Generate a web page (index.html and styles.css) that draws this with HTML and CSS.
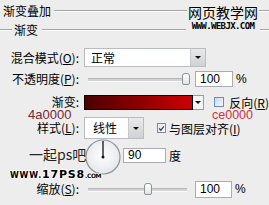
FILE: index.html
```html
<!DOCTYPE html>
<html>
<head>
<meta charset="utf-8">
<link rel="stylesheet" href="styles.css">
</head>
<body>
<div class="panel">
  <div class="legend legend-main"><span class="legend-text">渐变叠加</span><span class="rule"></span></div>
  <div class="legend legend-sub"><span class="rule rule-lead"></span><span class="legend-text">渐变</span><span class="rule"></span></div>

  <div class="row row-blend">
    <span class="label">混合模式(<u>O</u>):</span>
    <div class="select select-blend"><span class="select-value">正常</span><span class="select-btn"><i class="tri"></i></span></div>
  </div>

  <div class="row row-opacity">
    <span class="label">不透明度(<u>P</u>):</span>
    <div class="slider slider-opacity"><span class="track"></span><span class="thumb"></span></div>
    <div class="num">100</div><span class="unit">%</span>
  </div>

  <div class="row row-gradient">
    <span class="label">渐变:</span>
    <div class="grad"></div><span class="grad-btn"><i class="tri"></i></span>
    <span class="check"></span><span class="check-label">反向(<u>R</u>)</span>
  </div>

  <div class="row row-style">
    <span class="label">样式(<u>L</u>):</span>
    <div class="select select-style"><span class="select-value">线性</span><span class="select-btn"><i class="tri"></i></span></div>
    <span class="check checked"><svg viewBox="0 0 9 9" width="9" height="9"><path d="M1.5 4.5 L3.7 6.8 L7.6 1.8" fill="none" stroke="#2a3a6a" stroke-width="1.6"/></svg></span><span class="check-label">与图层对齐(<u>I</u>)</span>
  </div>

  <div class="row row-angle">
    <span class="label label-angle"></span>
    <svg class="dial" viewBox="0 0 36 36" width="36" height="36">
      <defs><radialGradient id="dg" cx="50%" cy="45%" r="55%"><stop offset="0" stop-color="#ffffff"/><stop offset="1" stop-color="#e4e7ec"/></radialGradient></defs>
      <circle cx="18" cy="18" r="17" fill="url(#dg)" stroke="#8d939b" stroke-width="1.2"/>
      <line x1="18" y1="18" x2="18" y2="2" stroke="#111" stroke-width="1.3"/>
      <circle cx="18" cy="18" r="1.5" fill="#111"/>
    </svg>
    <div class="num num-angle">90</div><span class="unit">度</span>
  </div>

  <div class="row row-scale">
    <span class="label">缩放(<u>S</u>):</span>
    <div class="slider slider-scale"><span class="track"></span><span class="thumb"></span></div>
    <div class="num">100</div><span class="unit">%</span>
  </div>

  <div class="note note-dark">4a0000</div>
  <div class="note note-red">ce0000</div>
  <div class="wm wm-top"><div class="wm-cn">网页教学网</div><div class="wm-url">WWW.WEBJX.COM</div></div>
  <div class="wm wm-ps">一起ps吧</div>
  <div class="wm wm-17"><span class="s">WWW.</span><span class="b">17PS8</span><span class="s2">.COM</span></div>
</div>
</body>
</html>
```

FILE: styles.css
```css
html, body {
  margin: 0;
  padding: 0;
  background: #ededed;
}
body {
  width: 269px;
  height: 205px;
  overflow: hidden;
  font-family: "Noto Sans CJK SC", "Noto Sans", sans-serif;
  font-size: 12px;
  color: #000;
}
.panel {
  position: relative;
  width: 269px;
  height: 205px;
  padding-top: 4px;
  box-sizing: border-box;
  overflow: hidden;
}
u { text-decoration: underline; text-underline-offset: 1px; }

.legend {
  display: flex;
  align-items: center;
  height: 14px;
  line-height: 14px;
  font-size: 12px;
}
.legend-main { padding-left: 3px; }
.legend-main .legend-text { margin-right: 3px; }
.legend-sub { margin-top: 5px; }
.legend-sub .legend-text { margin: 0 4px 0 2px; }
.rule {
  flex: 1;
  height: 0;
  border-top: 1px solid #a3a3a3;
  border-bottom: 1px solid #ffffff;
}
.rule-lead { flex: 0 0 12px; }

.row {
  display: flex;
  align-items: center;
}
.label {
  width: 79px;
  text-align: right;
  flex: none;
  margin-right: 5px;
  line-height: 14px;
}
.row-blend { margin-top: 11px; height: 19px; }
.row-opacity { margin-top: 4px; height: 16px; }
.row-gradient { margin-top: 7px; height: 16px; }
.row-style { margin-top: 7px; height: 22px; }
.row-angle { margin-top: 0; height: 36px; }
.row-scale { margin-top: 5px; height: 18px; }

.select {
  display: flex;
  height: 100%;
  box-sizing: border-box;
  border: 1px solid #b9bcc1;
  background: #fff;
}
.select-blend { width: 122px; }
.select-style { width: 60px; }
.select-value {
  flex: 1;
  padding-left: 6px;
  line-height: 17px;
  font-size: 12px;
}
.row-style .select-value { line-height: 20px; padding-left: 8px; }
.select-btn {
  width: 14px;
  border-left: 1px solid #c6c9cd;
  background: linear-gradient(#e9eaec, #cfd1d4);
  display: flex;
  align-items: center;
  justify-content: center;
}
.tri {
  width: 0;
  height: 0;
  border-left: 3px solid transparent;
  border-right: 3px solid transparent;
  border-top: 3px solid #111;
}

.slider {
  position: relative;
  height: 16px;
  margin-left: 4px;
}
.slider-opacity { width: 102px; }
.slider-scale { width: 102px; }
.track {
  position: absolute;
  left: 0;
  right: 6px;
  top: 7px;
  height: 2px;
  background: #d3d3d3;
  border-top: 1px solid #b8b8b8;
  border-bottom: 1px solid #fafafa;
}
.slider-scale .track { right: 3px; }
.thumb {
  position: absolute;
  top: 2px;
  width: 6px;
  height: 10px;
  border: 1px solid #8c9198;
  border-radius: 3px 3px 2px 2px;
  background: linear-gradient(#ffffff, #e2e4e7);
}
.slider-opacity .thumb { left: 94px; }
.slider-scale .thumb { left: 56px; }

.num {
  width: 38px;
  height: 16px;
  box-sizing: border-box;
  border: 1px solid #a9adb3;
  background: #fff;
  padding-left: 4px;
  line-height: 14px;
  font-family: "Liberation Sans", Arial, sans-serif;
  font-size: 12px;
  margin-left: 3px;
}
.row-opacity .num { margin-left: 5px; }
.row-scale .num { height: 17px; line-height: 15px; margin-left: 5px; width: 37px; }
.unit {
  margin-left: 3px;
  font-family: "Liberation Sans", Arial, sans-serif;
  font-size: 12px;
}
.row-angle .unit { font-family: "Noto Sans CJK SC", sans-serif; margin-left: 3px; }
.num-angle { width: 43px; height: 15px; line-height: 13px; margin-left: 2px; margin-top: -4px; }
.row-angle .unit { margin-top: -4px; }

.grad {
  width: 111px;
  height: 15px;
  box-sizing: border-box;
  border: 1px solid #000;
  background: linear-gradient(to right, #4a0000, #ce0000);
}
.grad-btn {
  width: 11px;
  height: 15px;
  box-sizing: border-box;
  border: 1px solid #9a9da2;
  border-left: 0;
  background: #f4f4f4;
  display: flex;
  align-items: center;
  justify-content: center;
}
.check {
  width: 10px;
  height: 10px;
  box-sizing: border-box;
  border: 1px solid #6e8fb3;
  background: linear-gradient(135deg, #c9dbee, #f2f7fc);
  margin-left: 10px;
  flex: none;
  display: flex;
  align-items: center;
  justify-content: center;
}
.check-label { margin-left: 5px; white-space: nowrap; }
.row-style .check { margin-left: 13px; width: 9px; height: 10px; background: linear-gradient(135deg, #dfe6ef, #ffffff); border-color: #7f8a99; }
.row-style .check-label { margin-left: 3px; }

.dial { margin-left: 1px; flex: none; }

.note {
  position: absolute;
  font-family: "Liberation Sans", Arial, sans-serif;
  line-height: 10px;
}
.note-dark { left: 28px; top: 110px; font-size: 13px; color: #7b2435; }
.note-red { left: 212px; top: 110px; font-size: 12.5px; color: #d0313f; }

.wm { position: absolute; }
.wm-top {
  left: 186px;
  top: 4px;
  width: 74px;
  text-align: center;
}
.wm-cn {
  display: inline-block;
  background: #ededed;
  font-size: 14px;
  line-height: 17px;
  padding: 0 1px;
}
.wm-url {
  background: #ededed;
  font-family: "DejaVu Sans Mono", monospace;
  font-weight: bold;
  font-size: 9px;
  line-height: 9px;
  letter-spacing: -0.6px;
  margin-top: 1px;
}
.wm-ps {
  left: 29px;
  top: 146px;
  font-size: 14px;
  line-height: 17px;
  color: #222;
  text-shadow: 0 0 1px #fff;
}
.wm-17 {
  left: 10px;
  top: 169px;
  font-family: "DejaVu Sans", sans-serif;
  font-weight: bold;
  font-size: 11px;
  color: #000;
  line-height: 11px;
  white-space: nowrap;
  text-shadow: 1px 0 0 #fff, -1px 0 0 #fff, 0 1px 0 #fff, 0 -1px 0 #fff;
}
.wm-17 .s { font-size: 8px; letter-spacing: 0.8px; }
.wm-17 .b { font-size: 11px; letter-spacing: 0.8px; }
.wm-17 .s2 { font-size: 6px; letter-spacing: -0.4px; }
```
